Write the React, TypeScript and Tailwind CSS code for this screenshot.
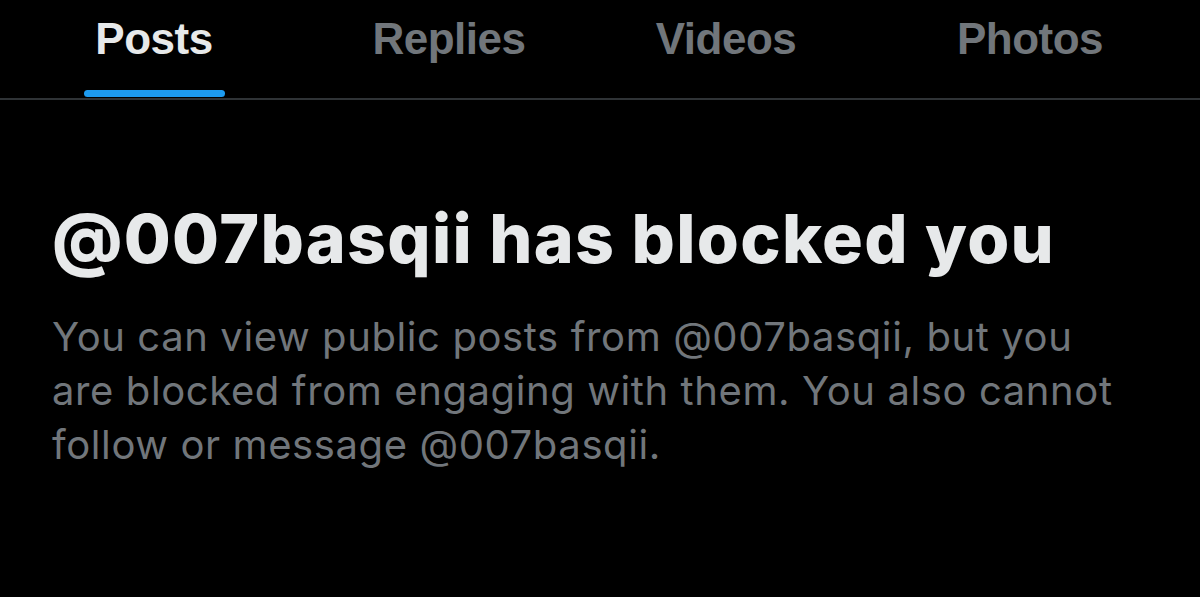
const tabs = [
  { label: 'Posts', width: 'w-[308px]', active: true },
  { label: 'Replies', width: 'w-[282px]', active: false },
  { label: 'Videos', width: 'w-[272px]', active: false },
  { label: 'Photos', width: 'w-[336px]', active: false },
]

export default function App() {
  return (
    <div className="h-[597px] w-[1200px] overflow-hidden bg-black font-['Liberation_Sans',sans-serif]">
      {/* profile tabs */}
      <div className="flex h-[100px] border-b-2 border-[#2f3336]">
        {tabs.map((tab) => (
          <div key={tab.label} className={`${tab.width} flex flex-col items-center`}>
            <div
              className={`pt-[14px] text-[44px] font-bold leading-[50px] tracking-[-0.5px] ${
                tab.active ? 'text-[#e7e9ea]' : 'text-[#71767b]'
              }`}
            >
              {tab.label}
            </div>
            {tab.active && <div className="mt-auto mb-[1px] h-[7px] w-[141px] rounded-full bg-[#1d9bf0]" />}
          </div>
        ))}
      </div>

      {/* blocked notice */}
      <div className="px-[52px] pt-[100px] font-['Inter',sans-serif]">
        <h1 className="text-[68px] font-extrabold leading-[76px] tracking-[1.3px] text-[#e7e9ea]">
          @007basqii has blocked you
        </h1>
        <p className="mt-[34px] max-w-[1075px] text-[40px] leading-[54px] tracking-[0.6px] text-[#71767b]">
          You can view public posts from @007basqii, but you are blocked from engaging with them. You also cannot
          follow or message @007basqii.
        </p>
      </div>
    </div>
  )
}
